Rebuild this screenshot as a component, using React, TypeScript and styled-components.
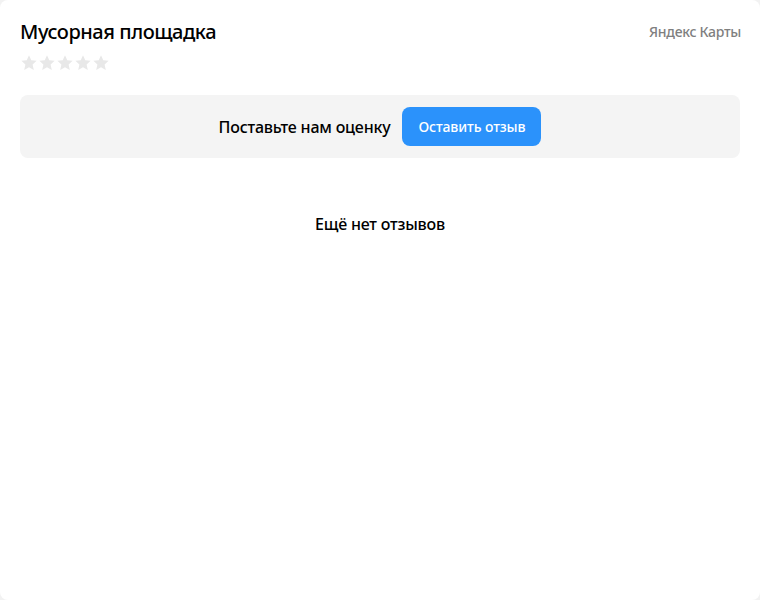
import React from "react";
import styled, { createGlobalStyle } from "styled-components";

const Global = createGlobalStyle`
  html, body { margin: 0; padding: 0; background: #f2f2f2; }
  body { font-family: "Noto Sans", "Inter", sans-serif; -webkit-font-smoothing: antialiased; }
`;

const Card = styled.div`
  width: 760px;
  height: 600px;
  box-sizing: border-box;
  background: #fff;
  border-radius: 8px;
  padding: 18px 20px 20px;
  display: flex;
  flex-direction: column;
`;

const Header = styled.div`
  display: flex;
  justify-content: space-between;
  align-items: flex-start;
`;

const TitleBlock = styled.div`
  display: flex;
  flex-direction: column;
  gap: 8px;
`;

const Title = styled.h1`
  margin: 0;
  font-size: 20px;
  line-height: 28px;
  font-weight: 500;
  color: #000;
  letter-spacing: -0.45px;
`;

const Stars = styled.div`
  display: flex;
  gap: 0px;
`;

const Brand = styled.div`
  font-size: 14px;
  line-height: 28px;
  font-weight: 500;
  color: #7f7f7f;
  letter-spacing: -0.3px;
  margin-right: -1px;
`;

const RateBox = styled.div`
  margin-top: 23px;
  height: 63px;
  background: #f4f4f4;
  border-radius: 8px;
  display: flex;
  align-items: center;
  justify-content: center;
  gap: 12px;
`;

const RateText = styled.span`
  font-size: 16px;
  font-weight: 500;
  color: #000;
  letter-spacing: -0.2px;
`;

const Button = styled.button`
  height: 39px;
  padding: 0 16px;
  border: none;
  border-radius: 8px;
  background: #2b92fb;
  color: #fff;
  font-family: inherit;
  font-size: 14px;
  font-weight: 500;
  letter-spacing: -0.1px;
  cursor: pointer;
`;

const Empty = styled.div`
  margin-top: 55px;
  text-align: center;
  font-size: 16px;
  font-weight: 500;
  color: #000;
  letter-spacing: -0.2px;
`;

const Star = () => (
  <svg width="18" height="18" viewBox="0 0 24 24">
    <path
      d="M12 1.8l3 6.6 7.2.7-5.4 4.9 1.6 7.2L12 17.5l-6.4 3.7 1.6-7.2L1.8 9.1 9 8.4z"
      fill="#e8e8e8"
    />
  </svg>
);

export default function App() {
  return (
    <>
      <Global />
      <Card>
        <Header>
          <TitleBlock>
            <Title>Мусорная площадка</Title>
            <Stars>
              {[0, 1, 2, 3, 4].map((i) => (
                <Star key={i} />
              ))}
            </Stars>
          </TitleBlock>
          <Brand>Яндекс Карты</Brand>
        </Header>
        <RateBox>
          <RateText>Поставьте нам оценку</RateText>
          <Button>Оставить отзыв</Button>
        </RateBox>
        <Empty>Ещё нет отзывов</Empty>
      </Card>
    </>
  );
}
